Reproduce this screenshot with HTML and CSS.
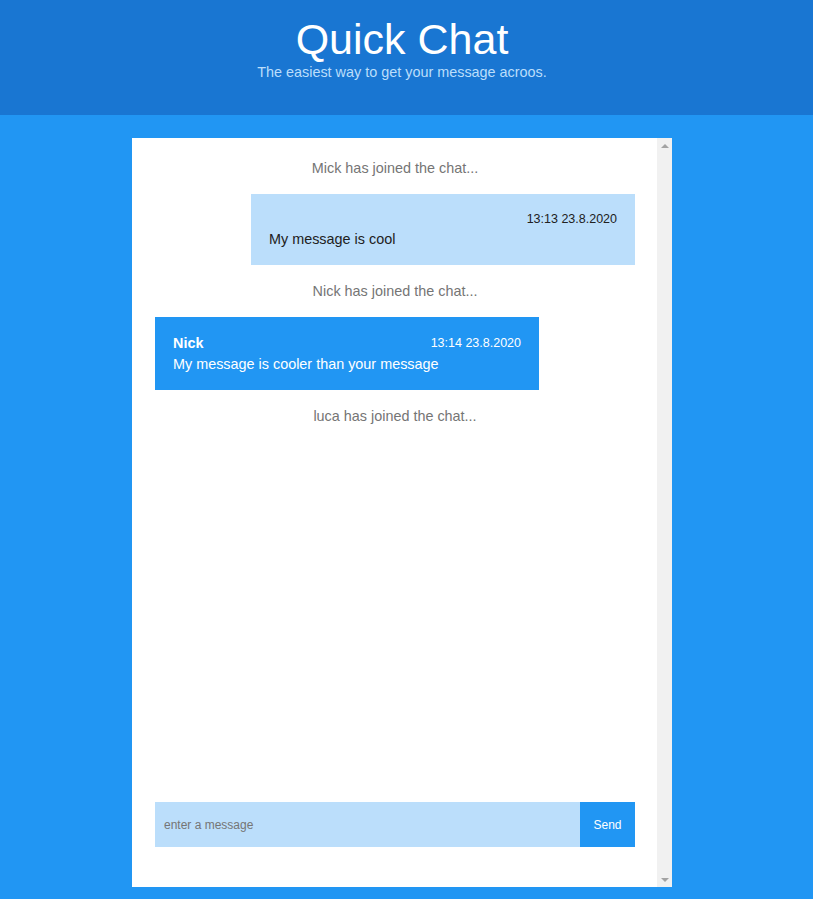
FILE: index.html
```html
<!DOCTYPE html>
<html lang="en">
<head>
<meta charset="utf-8">
<title>Quick Chat</title>
<link rel="stylesheet" href="styles.css">
</head>
<body>
<header class="header">
  <h1 class="title">Quick Chat</h1>
  <p class="subtitle">The easiest way to get your message acroos.</p>
</header>
<main class="main">
  <section class="chat">
    <div class="chat-body">
      <div class="messages">
        <p class="system">Mick has joined the chat...</p>
        <div class="bubble bubble-own">
          <div class="bubble-head"><span class="time">13:13 23.8.2020</span></div>
          <p class="bubble-text">My message is cool</p>
        </div>
        <p class="system">Nick has joined the chat...</p>
        <div class="bubble bubble-other">
          <div class="bubble-head"><span class="author">Nick</span><span class="time">13:14 23.8.2020</span></div>
          <p class="bubble-text">My message is cooler than your message</p>
        </div>
        <p class="system">luca has joined the chat...</p>
      </div>
      <form class="composer">
        <input class="composer-input" type="text" placeholder="enter a message">
        <button class="composer-send" type="button">Send</button>
      </form>
    </div>
    <div class="scrollbar" aria-hidden="true">
      <span class="arrow arrow-up"></span>
      <span class="arrow arrow-down"></span>
    </div>
  </section>
</main>
</body>
</html>
```
FILE: styles.css
```css
* { box-sizing: border-box; }
html, body { margin: 0; padding: 0; }
body {
  background: #2196f3;
  font-family: "Liberation Sans", Arial, sans-serif;
  height: 899px;
  overflow: hidden;
}
.header {
  background: #1976d2;
  height: 115px;
  text-align: center;
  padding: 14px 9px 0 0;
}
.title {
  margin: 0;
  font-size: 43px;
  font-weight: normal;
  line-height: 50px;
  color: #ffffff;
}
.subtitle {
  margin: 0;
  font-size: 14.4px;
  line-height: 16px;
  color: #bbdefb;
}
.main {
  display: flex;
  justify-content: center;
  padding: 23px 9px 0 0;
}
.chat {
  width: 540px;
  height: 749px;
  background: #ffffff;
  display: flex;
}
.chat-body {
  flex: 1;
  display: flex;
  flex-direction: column;
  padding: 4px 22px 40px 23px;
}
.scrollbar {
  width: 15px;
  background: #f1f1f1;
  display: flex;
  flex-direction: column;
  justify-content: space-between;
  align-items: center;
  padding: 6px 0 5px;
}
.arrow {
  width: 0;
  height: 0;
  border-left: 4px solid transparent;
  border-right: 4px solid transparent;
}
.arrow-up { border-bottom: 4px solid #a3a3a3; }
.arrow-down { border-top: 4px solid #a3a3a3; }
.messages {
  flex: 1;
  display: flex;
  flex-direction: column;
}
.system {
  margin: 0;
  padding: 17px 0;
  text-align: center;
  font-size: 14.4px;
  line-height: 18px;
  color: #757575;
}
.bubble {
  width: 80%;
  padding: 17px 18px;
}
.bubble-own {
  align-self: flex-end;
  background: #bbdefb;
  color: #212121;
}
.bubble-other {
  align-self: flex-start;
  background: #2196f3;
  color: #ffffff;
}
.bubble-head {
  display: flex;
  justify-content: space-between;
  align-items: center;
}
.bubble-own .bubble-head {
  justify-content: flex-end;
  height: 16px;
}
.bubble-other .bubble-head { height: 18px; }
.author {
  font-weight: bold;
  font-size: 14.4px;
  line-height: 18px;
}
.time {
  font-size: 12.5px;
  line-height: 16px;
}
.bubble-text {
  margin: 3px 0 0;
  font-size: 14.4px;
  line-height: 18px;
}
.composer {
  display: flex;
  height: 45px;
  margin: 0;
}
.composer-input {
  flex: 1;
  border: none;
  outline: none;
  background: #bbdefb;
  padding: 0 9px;
  font-family: "Liberation Sans", Arial, sans-serif;
  font-size: 12px;
  color: #333;
}
.composer-input::placeholder { color: #757575; }
.composer-send {
  width: 55px;
  border: none;
  background: #2196f3;
  color: #ffffff;
  font-family: "Liberation Sans", Arial, sans-serif;
  font-size: 12px;
  padding: 0;
}
```
